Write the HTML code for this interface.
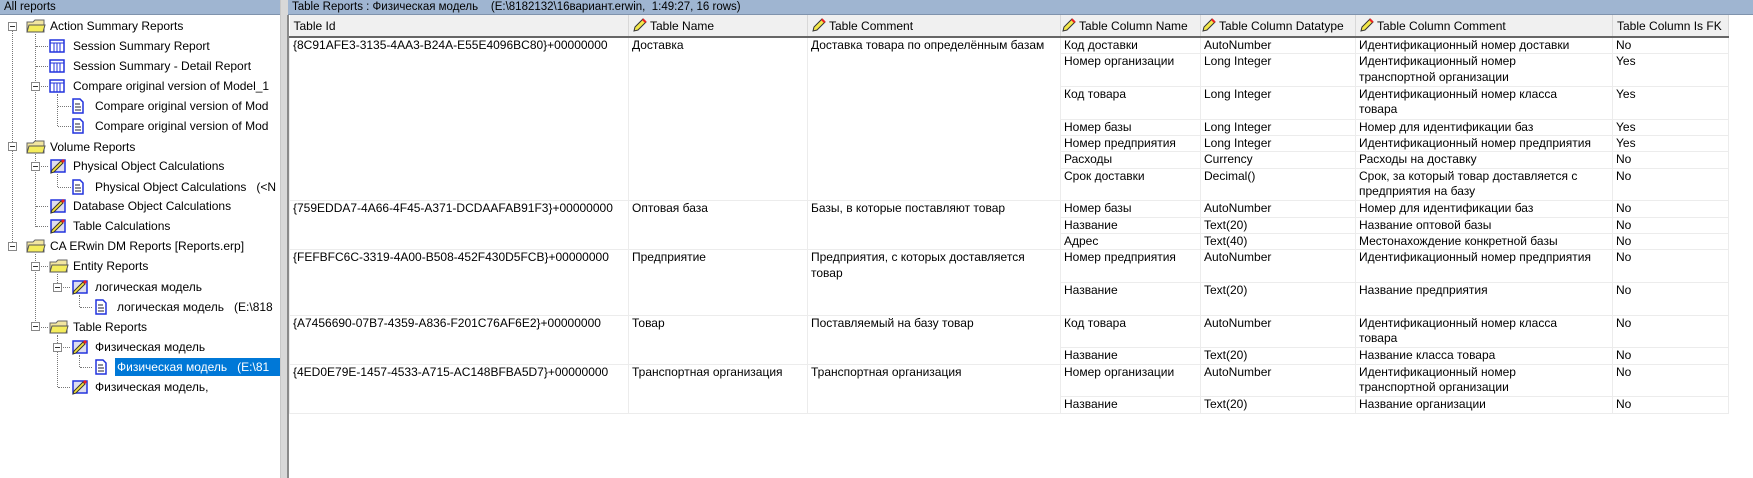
<!DOCTYPE html>
<html><head><meta charset="utf-8">
<style>
*{margin:0;padding:0;box-sizing:border-box}
body{width:1753px;height:478px;background:#fff;font-family:"Liberation Sans","DejaVu Sans",sans-serif;font-size:12px;color:#000;position:relative;overflow:hidden}
.bar{position:absolute;top:0;height:15px;background:#9fb5d1;border-bottom:1px solid #7f93ad;font-size:11.5px;line-height:15px;padding-left:4px;white-space:nowrap;overflow:hidden}
.split{position:absolute;left:280px;top:0;width:8px;height:478px;background:#d8d8d8;border-left:1px solid #c8c8c8}
.splitd{position:absolute;left:287px;top:15px;width:2px;height:463px;background:#8a8a8a}
.ti{position:absolute;height:20px;line-height:20px;white-space:nowrap;font-size:12px}
.ic{position:absolute}
.mb{position:absolute;width:9px;height:9px;border:1px solid #888;background:#fff}
.mb:after{content:"";position:absolute;left:1px;top:3px;width:5px;height:1px;background:#333}
.dv{position:absolute;border-left:1px dotted #777;width:0}
.dh{position:absolute;border-top:1px dotted #777;height:0}
table{position:absolute;left:289px;top:15px;border-collapse:collapse;table-layout:fixed}
th{height:22px;background:#f0f0f0;font-weight:normal;text-align:left;border-right:1px solid #d8d8d8;border-bottom:2px solid #666;padding-left:4px;white-space:nowrap;overflow:hidden;font-size:12px}
td{vertical-align:top;border:1px solid #ececec;padding:0 0 0 3px;line-height:15.3px;overflow:hidden;font-size:12px;white-space:nowrap}
tr.r1{height:16.33px}tr.r2{height:32.67px}
.pen{display:inline-block;vertical-align:-2px;margin-right:3px}
</style></head><body>
<div class="bar" style="left:0;width:280px">All reports</div>
<div class="bar" style="left:288px;width:1465px">Table Reports : Физическая модель &nbsp;&nbsp;&nbsp;(E:\8182132\16вариант.erwin, &nbsp;1:49:27, 16 rows)</div>
<div class="split"></div><div class="splitd"></div>

<div class="dv" style="left:12px;top:31px;height:215px"></div>
<div class="dv" style="left:35px;top:34px;height:193px"></div>
<div class="dv" style="left:35px;top:254px;height:73px"></div>
<div class="dh" style="left:36px;top:46px;width:12px"></div>
<div class="dh" style="left:36px;top:66px;width:12px"></div>
<div class="dh" style="left:41px;top:86px;width:7px"></div>
<div class="dv" style="left:57px;top:94px;height:32px"></div>
<div class="dh" style="left:58px;top:106px;width:13px"></div>
<div class="dh" style="left:58px;top:126px;width:13px"></div>
<div class="dh" style="left:41px;top:166px;width:7px"></div>
<div class="dv" style="left:57px;top:174px;height:13px"></div>
<div class="dh" style="left:58px;top:187px;width:13px"></div>
<div class="dh" style="left:36px;top:206px;width:12px"></div>
<div class="dh" style="left:36px;top:226px;width:12px"></div>
<div class="dh" style="left:41px;top:266px;width:7px"></div>
<div class="dh" style="left:41px;top:327px;width:7px"></div>
<div class="dv" style="left:57px;top:274px;height:13px"></div>
<div class="dv" style="left:57px;top:335px;height:52px"></div>
<div class="dh" style="left:63px;top:287px;width:7px"></div>
<div class="dh" style="left:63px;top:347px;width:7px"></div>
<div class="dh" style="left:58px;top:387px;width:12px"></div>
<div class="dv" style="left:79px;top:295px;height:12px"></div>
<div class="dh" style="left:80px;top:307px;width:12px"></div>
<div class="dv" style="left:79px;top:355px;height:12px"></div>
<div class="dh" style="left:80px;top:367px;width:12px"></div>

<div class="mb" style="left:8px;top:22px"></div>
<div class="mb" style="left:8px;top:142px"></div>
<div class="mb" style="left:8px;top:242px"></div>
<div class="mb" style="left:31px;top:82px"></div>
<div class="mb" style="left:31px;top:162px"></div>
<div class="mb" style="left:31px;top:262px"></div>
<div class="mb" style="left:31px;top:322px"></div>
<div class="mb" style="left:53px;top:283px"></div>
<div class="mb" style="left:53px;top:343px"></div>

<svg width="0" height="0" style="position:absolute"><defs>
<symbol id="fold" viewBox="0 0 20 16"><path d="M1 4h6l2-2h9v12H1z" fill="#f2e6a0" stroke="#666"/><path d="M3 7h16l-2 7H1z" fill="#f4ec5c" stroke="#555"/></symbol>
<symbol id="grid" viewBox="0 0 16 14"><rect x="1" y="1" width="14" height="12" fill="#fff" stroke="#2233dd" stroke-width="1.5"/><path d="M1 4h14M5 4v9M8 4v9M11 4v9" stroke="#2233dd"/></symbol>
<symbol id="doc" viewBox="0 0 12 16"><path d="M1 1h7l3 3v11H1z" fill="#fff" stroke="#2233dd" stroke-width="1.5"/><path d="M3 6h5M3 9h6M3 12h6" stroke="#223"/></symbol>
<symbol id="pen" viewBox="0 0 18 16"><rect x="2" y="2" width="14" height="12" fill="#dde" stroke="#2233dd" stroke-width="1.5"/><path d="M2 15l3-1 9-9-2-2-9 9z" fill="#f4e23a" stroke="#333"/><path d="M12 3l2 2 2-2-2-2z" fill="#e22"/></symbol>
<symbol id="pn" viewBox="0 0 14 14"><path d="M1 13l1-4 8-8 3 3-8 8z" fill="#f4e84a" stroke="#333"/><path d="M9 2l3 3 1.5-1.5-3-3z" fill="#e22"/></symbol>
</defs></svg>

<svg class="ic" style="left:26px;top:18px" width="20" height="16"><use href="#fold"/></svg>
<div class="ti" style="left:50px;top:16px">Action Summary Reports</div>
<svg class="ic" style="left:49px;top:39px" width="16" height="14"><use href="#grid"/></svg>
<div class="ti" style="left:73px;top:36px">Session Summary Report</div>
<svg class="ic" style="left:49px;top:59px" width="16" height="14"><use href="#grid"/></svg>
<div class="ti" style="left:73px;top:56px">Session Summary - Detail Report</div>
<svg class="ic" style="left:49px;top:79px" width="16" height="14"><use href="#grid"/></svg>
<div class="ti" style="left:73px;top:76px">Compare original version of Model_1</div>
<svg class="ic" style="left:72px;top:98px" width="12" height="16"><use href="#doc"/></svg>
<div class="ti" style="left:95px;top:96px;width:185px;overflow:hidden">Compare original version of Mod</div>
<svg class="ic" style="left:72px;top:118px" width="12" height="16"><use href="#doc"/></svg>
<div class="ti" style="left:95px;top:116px;width:185px;overflow:hidden">Compare original version of Mod</div>
<svg class="ic" style="left:26px;top:139px" width="20" height="16"><use href="#fold"/></svg>
<div class="ti" style="left:50px;top:137px">Volume Reports</div>
<svg class="ic" style="left:49px;top:158px" width="18" height="16"><use href="#pen"/></svg>
<div class="ti" style="left:73px;top:156px">Physical Object Calculations</div>
<svg class="ic" style="left:72px;top:179px" width="12" height="16"><use href="#doc"/></svg>
<div class="ti" style="left:95px;top:177px;width:185px;overflow:hidden">Physical Object Calculations &nbsp;&nbsp;(&lt;N</div>
<svg class="ic" style="left:49px;top:198px" width="18" height="16"><use href="#pen"/></svg>
<div class="ti" style="left:73px;top:196px">Database Object Calculations</div>
<svg class="ic" style="left:49px;top:218px" width="18" height="16"><use href="#pen"/></svg>
<div class="ti" style="left:73px;top:216px">Table Calculations</div>
<svg class="ic" style="left:26px;top:238px" width="20" height="16"><use href="#fold"/></svg>
<div class="ti" style="left:50px;top:236px">CA ERwin DM Reports [Reports.erp]</div>
<svg class="ic" style="left:49px;top:258px" width="20" height="16"><use href="#fold"/></svg>
<div class="ti" style="left:73px;top:256px">Entity Reports</div>
<svg class="ic" style="left:71px;top:279px" width="18" height="16"><use href="#pen"/></svg>
<div class="ti" style="left:95px;top:277px">логическая модель</div>
<svg class="ic" style="left:95px;top:299px" width="12" height="16"><use href="#doc"/></svg>
<div class="ti" style="left:117px;top:297px;width:163px;overflow:hidden">логическая модель &nbsp;&nbsp;(E:\818</div>
<svg class="ic" style="left:49px;top:319px" width="20" height="16"><use href="#fold"/></svg>
<div class="ti" style="left:73px;top:317px">Table Reports</div>
<svg class="ic" style="left:71px;top:339px" width="18" height="16"><use href="#pen"/></svg>
<div class="ti" style="left:95px;top:337px">Физическая модель</div>
<svg class="ic" style="left:95px;top:359px" width="12" height="16"><use href="#doc"/></svg>
<div class="ti" style="left:115px;top:358px;width:165px;height:18px;line-height:18px;background:#0078d7;color:#fff;padding-left:2px;overflow:hidden">Физическая модель &nbsp;&nbsp;(E:\81</div>
<svg class="ic" style="left:71px;top:379px" width="18" height="16"><use href="#pen"/></svg>
<div class="ti" style="left:95px;top:377px">Физическая модель,</div>

<table>
<colgroup><col style="width:339px"><col style="width:179px"><col style="width:253px"><col style="width:140px"><col style="width:155px"><col style="width:257px"><col style="width:116px"></colgroup>
<tr><th>Table Id</th>
<th><svg class="pen" width="14" height="14"><use href="#pn"/></svg>Table Name</th>
<th><svg class="pen" width="14" height="14"><use href="#pn"/></svg>Table Comment</th>
<th style="padding-left:1px"><svg class="pen" width="14" height="14"><use href="#pn"/></svg>Table Column Name</th>
<th style="padding-left:1px"><svg class="pen" width="14" height="14"><use href="#pn"/></svg>Table Column Datatype</th>
<th><svg class="pen" width="14" height="14"><use href="#pn"/></svg>Table Column Comment</th>
<th>Table Column Is FK</th></tr>

<tr class="r1"><td rowspan="7">{8C91AFE3-3135-4AA3-B24A-E55E4096BC80}+00000000</td><td rowspan="7">Доставка</td><td rowspan="7">Доставка товара по определённым базам</td><td>Код доставки</td><td>AutoNumber</td><td>Идентификационный номер доставки</td><td>No</td></tr>
<tr class="r2"><td>Номер организации</td><td>Long Integer</td><td>Идентификационный номер<br>транспортной организации</td><td>Yes</td></tr>
<tr class="r2"><td>Код товара</td><td>Long Integer</td><td>Идентификационный номер класса<br>товара</td><td>Yes</td></tr>
<tr class="r1"><td>Номер базы</td><td>Long Integer</td><td>Номер для идентификации баз</td><td>Yes</td></tr>
<tr class="r1"><td>Номер предприятия</td><td>Long Integer</td><td>Идентификационный номер предприятия</td><td>Yes</td></tr>
<tr class="r1"><td>Расходы</td><td>Currency</td><td>Расходы на доставку</td><td>No</td></tr>
<tr class="r2"><td>Срок доставки</td><td>Decimal()</td><td>Срок, за который товар доставляется с<br>предприятия на базу</td><td>No</td></tr>

<tr class="r1"><td rowspan="3">{759EDDA7-4A66-4F45-A371-DCDAAFAB91F3}+00000000</td><td rowspan="3">Оптовая база</td><td rowspan="3">Базы, в которые поставляют товар</td><td>Номер базы</td><td>AutoNumber</td><td>Номер для идентификации баз</td><td>No</td></tr>
<tr class="r1"><td>Название</td><td>Text(20)</td><td>Название оптовой базы</td><td>No</td></tr>
<tr class="r1"><td>Адрес</td><td>Text(40)</td><td>Местонахождение конкретной базы</td><td>No</td></tr>

<tr class="r2"><td rowspan="2">{FEFBFC6C-3319-4A00-B508-452F430D5FCB}+00000000</td><td rowspan="2">Предприятие</td><td rowspan="2">Предприятия, с которых доставляется<br>товар</td><td>Номер предприятия</td><td>AutoNumber</td><td>Идентификационный номер предприятия</td><td>No</td></tr>
<tr class="r2"><td>Название</td><td>Text(20)</td><td>Название предприятия</td><td>No</td></tr>

<tr class="r2"><td rowspan="2">{A7456690-07B7-4359-A836-F201C76AF6E2}+00000000</td><td rowspan="2">Товар</td><td rowspan="2">Поставляемый на базу товар</td><td>Код товара</td><td>AutoNumber</td><td>Идентификационный номер класса<br>товара</td><td>No</td></tr>
<tr class="r1"><td>Название</td><td>Text(20)</td><td>Название класса товара</td><td>No</td></tr>

<tr class="r2"><td rowspan="2">{4ED0E79E-1457-4533-A715-AC148BFBA5D7}+00000000</td><td rowspan="2">Транспортная организация</td><td rowspan="2">Транспортная организация</td><td>Номер организации</td><td>AutoNumber</td><td>Идентификационный номер<br>транспортной организации</td><td>No</td></tr>
<tr class="r1"><td>Название</td><td>Text(20)</td><td>Название организации</td><td>No</td></tr>
</table>
</body></html>
